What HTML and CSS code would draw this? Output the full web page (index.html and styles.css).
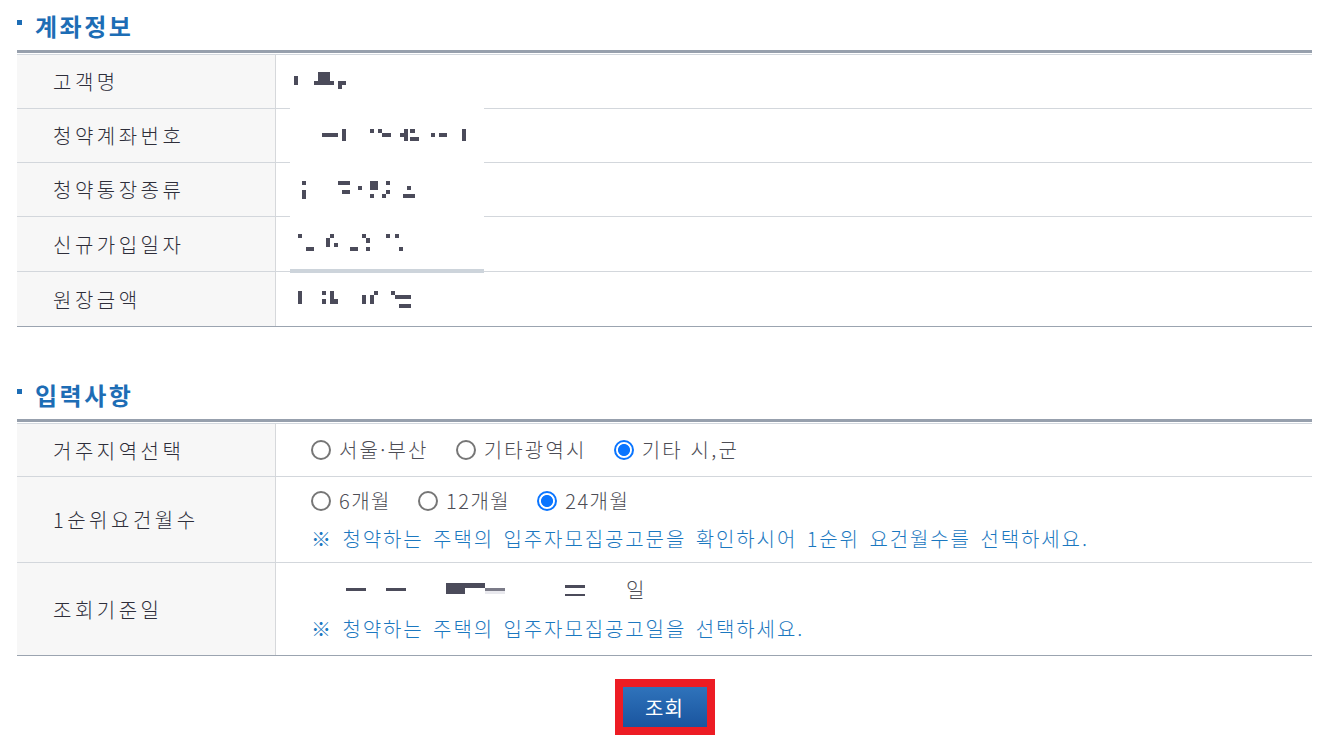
FILE: index.html
```html
<!DOCTYPE html>
<html lang="ko">
<head>
<meta charset="utf-8">
<title>계좌정보</title>
<link rel="stylesheet" href="styles.css">
</head>
<body>
<div class="page">
  <h2 class="sec-title"><span class="bullet"></span>계좌정보</h2>
  <div class="tbl tbl-account">
    <div class="row r54"><div class="th">고객명</div><div class="td"></div></div>
    <div class="row r54"><div class="th">청약계좌번호</div><div class="td"></div></div>
    <div class="row r54"><div class="th">청약통장종류</div><div class="td"></div></div>
    <div class="row r55"><div class="th">신규가입일자</div><div class="td"></div></div>
    <div class="row r55 last"><div class="th">원장금액</div><div class="td"></div></div>
    <svg class="redact" width="194" height="250" viewBox="0 0 194 250" aria-hidden="true">
      <rect x="0" y="30" width="194" height="179" fill="#fff"/>
      <rect x="0" y="209" width="194" height="4" fill="#cdd4db"/>
      <g fill="#4b4b5a">
        <rect x="4" y="16" width="4" height="9"/>
        <rect x="28" y="12" width="12" height="9"/>
        <rect x="24" y="21" width="20" height="4"/>
        <rect x="48" y="21" width="8" height="4"/>
        <rect x="48" y="25" width="4" height="4"/>

        <rect x="32" y="73" width="16" height="4"/>
        <rect x="52" y="69" width="4" height="12"/>
        <rect x="80" y="69" width="4" height="4"/>
        <rect x="88" y="69" width="4" height="4"/>
        <rect x="92" y="73" width="9" height="4"/>
        <rect x="110" y="73" width="4" height="4"/>
        <rect x="114" y="69" width="4" height="12"/>
        <rect x="120" y="69" width="5" height="4"/>
        <rect x="120" y="77" width="9" height="4"/>
        <rect x="141" y="73" width="4" height="4"/>
        <rect x="149" y="73" width="8" height="4"/>
        <rect x="172" y="69" width="4" height="12"/>

        <rect x="12" y="121" width="4" height="4"/>
        <rect x="12" y="130" width="4" height="9"/>
        <rect x="48" y="121" width="12" height="4"/>
        <rect x="52" y="130" width="8" height="4"/>
        <rect x="68" y="126" width="4" height="4"/>
        <rect x="80" y="121" width="8" height="9"/>
        <rect x="80" y="134" width="4" height="4"/>
        <rect x="96" y="121" width="4" height="4"/>
        <rect x="96" y="130" width="4" height="4"/>
        <rect x="92" y="134" width="4" height="4"/>
        <rect x="117" y="126" width="4" height="4"/>
        <rect x="113" y="134" width="12" height="4"/>

        <rect x="8" y="174" width="4" height="4"/>
        <rect x="16" y="187" width="8" height="4"/>
        <rect x="40" y="174" width="4" height="4"/>
        <rect x="36" y="178" width="4" height="9"/>
        <rect x="44" y="183" width="4" height="4"/>
        <rect x="72" y="174" width="4" height="4"/>
        <rect x="76" y="178" width="4" height="5"/>
        <rect x="60" y="187" width="8" height="4"/>
        <rect x="76" y="187" width="4" height="4"/>
        <rect x="96" y="174" width="4" height="4"/>
        <rect x="105" y="174" width="4" height="4"/>
        <rect x="109" y="187" width="4" height="4"/>

        <rect x="8" y="231" width="4" height="13"/>
        <rect x="32" y="231" width="4" height="4"/>
        <rect x="32" y="239" width="4" height="5"/>
        <rect x="40" y="231" width="4" height="13"/>
        <rect x="44" y="239" width="4" height="5"/>
        <rect x="72" y="235" width="4" height="9"/>
        <rect x="80" y="235" width="4" height="9"/>
        <rect x="84" y="231" width="4" height="4"/>
        <rect x="101" y="231" width="4" height="4"/>
        <rect x="105" y="235" width="16" height="4"/>
        <rect x="109" y="244" width="12" height="4"/>
      </g>
    </svg>
  </div>

  <h2 class="sec-title sec-two"><span class="bullet"></span>입력사항</h2>
  <div class="tbl tbl-input">
    <div class="row r53">
      <div class="th">거주지역선택</div>
      <div class="td">
        <div class="radios">
          <label class="radio"><input type="radio" name="area"><span>서울·부산</span></label>
          <label class="radio"><input type="radio" name="area"><span>기타광역시</span></label>
          <label class="radio"><input type="radio" name="area" checked><span>기타 시,군</span></label>
        </div>
      </div>
    </div>
    <div class="row r86">
      <div class="th">1순위요건월수</div>
      <div class="td stack months">
        <div class="radios">
          <label class="radio"><input type="radio" name="months"><span>6개월</span></label>
          <label class="radio"><input type="radio" name="months"><span>12개월</span></label>
          <label class="radio"><input type="radio" name="months" checked><span>24개월</span></label>
        </div>
        <p class="note">※ 청약하는 주택의 입주자모집공고문을 확인하시어 1순위 요건월수를 선택하세요.</p>
      </div>
    </div>
    <div class="row r93 last">
      <div class="th">조회기준일</div>
      <div class="td stack date">
        <div class="date-line">
          <svg class="date-mask" width="300" height="32" viewBox="0 0 300 32" aria-hidden="true">
            <g fill="#4b4b5a">
              <rect x="34" y="15" width="20" height="3"/>
              <rect x="74" y="15" width="20" height="3"/>
              <rect x="134" y="10" width="19" height="11"/>
              <rect x="153" y="10" width="20" height="5"/>
              <rect x="253" y="12" width="20" height="3"/>
              <rect x="253" y="21" width="20" height="2"/>
            </g>
            <rect x="173" y="15" width="20" height="3" fill="#7b7b88"/>
            <rect x="173" y="18" width="20" height="3" fill="#e9e9ee"/>
          </svg>
          <span class="day">일</span>
        </div>
        <p class="note">※ 청약하는 주택의 입주자모집공고일을 선택하세요.</p>
      </div>
    </div>
  </div>

  <div class="actions">
    <span class="highlight"><button type="button" class="btn">조회</button></span>
  </div>
</div>
</body>
</html>
```

FILE: styles.css
```css
* { box-sizing: border-box; }

html, body {
  margin: 0;
  padding: 0;
  background: #fff;
}

body {
  font-family: "Noto Sans CJK KR", "Noto Sans", sans-serif;
  font-weight: 300;
  color: #333;
}

.page {
  width: 1322px;
  padding: 0 10px 0 17px;
}

.sec-title {
  margin: 0;
  height: 50px;
  display: flex;
  align-items: center;
  font-size: 24px;
  font-weight: 700;
  color: #1d6db5;
  letter-spacing: 2.5px;
}

.sec-two {
  margin-top: 42px;
}

.bullet {
  width: 5px;
  height: 5px;
  background: #1d6db5;
  margin-right: 13px;
  margin-top: -6px;
}

.tbl {
  position: relative;
  border-top: 3px solid #97a0ad;
  padding-top: 1px;
}

.tbl::before {
  content: "";
  display: block;
  height: 1px;
  background: #d3d8de;
}

.row {
  display: grid;
  grid-template-columns: 259px 1fr;
  border-bottom: 1px solid #d3d7dc;
}

.row.last {
  border-bottom-color: #9ba4b0;
}

.r53 { height: 53px; }
.r54 { height: 54px; }
.r55 { height: 55px; }
.r86 { height: 86px; }
.r93 { height: 93px; }

.th {
  background: #f7f7f7;
  border-right: 1px solid #d6d8db;
  padding-left: 36px;
  display: flex;
  align-items: center;
  font-size: 20px;
  letter-spacing: 3.5px;
  color: #2e2e3a;
}

.td {
  padding-left: 35px;
  display: flex;
  align-items: center;
  font-size: 20px;
  color: #4d4d55;
}

.td.stack {
  flex-direction: column;
  align-items: flex-start;
  justify-content: flex-start;
}

.months { padding-top: 11px; }
.date { padding-top: 10px; }

.radios {
  display: flex;
  align-items: center;
  gap: 27px;
  height: 26px;
}

.radio {
  display: flex;
  align-items: center;
  gap: 8px;
}

.radio input {
  appearance: none;
  -webkit-appearance: none;
  margin: 0;
  width: 20px;
  height: 20px;
  border: 2px solid #767676;
  border-radius: 50%;
  background: #fff;
}

.radio input:checked {
  border-color: #0a75ff;
  background: radial-gradient(circle, #0a75ff 0 5.6px, #fff 6.4px);
}

.radio span {
  line-height: 26px;
  letter-spacing: 2.2px;
}

.months .radio span {
  letter-spacing: 1.5px;
}

.note {
  margin: 12px 0 0;
  height: 26px;
  line-height: 26px;
  font-size: 20px;
  color: #1b78c0;
  letter-spacing: 1.9px;
  word-spacing: 2px;
  white-space: nowrap;
}

.date .note {
  margin-top: 11px;
}

.date-line {
  display: flex;
  align-items: center;
  height: 32px;
  margin-left: 1px;
}

.date-mask {
  display: block;
}

.day {
  margin-left: 14px;
  color: #4d4d55;
}

.actions {
  display: flex;
  justify-content: center;
  margin-top: 23px;
}

.highlight {
  display: block;
  border: 8px solid #ed1c24;
}

.btn {
  display: block;
  width: 84px;
  height: 40px;
  margin: 0;
  padding: 0;
  border: 0;
  background: linear-gradient(#2f73bb, #1a559f);
  color: #fff;
  font-family: "Noto Sans CJK KR", "Noto Sans", sans-serif;
  font-weight: 400;
  font-size: 20px;
  letter-spacing: 1px;
}

.redact {
  position: absolute;
  left: 273px;
  top: 7px;
}
```
